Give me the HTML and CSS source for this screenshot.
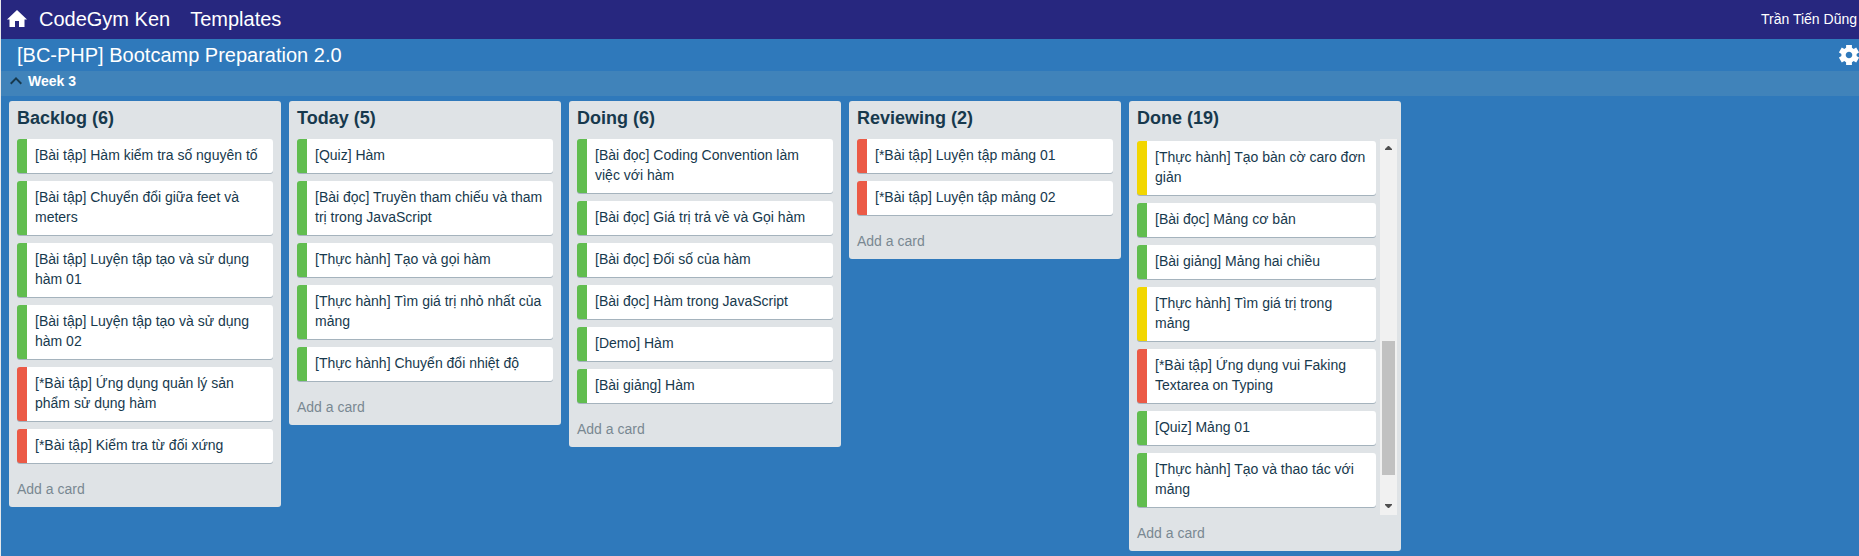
FILE: index.html
```html
<!DOCTYPE html>
<html lang="vi">
<head>
<meta charset="utf-8">
<meta name="viewport" content="width=device-width, initial-scale=1">
<title>[BC-PHP] Bootcamp Preparation 2.0</title>
<link rel="stylesheet" href="styles.css">
</head>
<body>
<header class="topbar">
  <nav class="topbar-nav">
    <a class="home-link" href="#" aria-label="Home"><svg class="home-icon" viewBox="0 0 20 17" aria-hidden="true"><path d="M8 17v-6h4v6h5.500V9.500H20L10 0 0 9.500h2.500V17z"/></svg></a>
    <a class="nav-link" href="#">CodeGym Ken</a>
    <a class="nav-link" href="#">Templates</a>
  </nav>
  <a class="user-link" href="#">Trần Tiến Dũng</a>
</header>
<div class="board-bar">
  <h1 class="board-title">[BC-PHP] Bootcamp Preparation 2.0</h1>
  <button class="settings" type="button" aria-label="Settings"><svg class="gear-icon" viewBox="-10 -10 20 20" aria-hidden="true"><g fill="none" stroke="currentColor"><circle r="5.500" stroke-width="4.400"/><path stroke-width="5.800" d="M0-10v4.500M0 10V5.500M8.660-5l-3.900 2.250M8.660 5l-3.900-2.250M-8.660-5l3.900 2.250M-8.660 5l3.900-2.250"/></g></svg></button>
</div>
<button class="lane-bar" type="button" aria-expanded="true"><svg class="chevron" viewBox="6 8 12 8" aria-hidden="true"><path d="M12 8l-6 6 1.410 1.410L12 10.830l4.590 4.580L18 14z"/></svg>Week 3</button>
<main class="board">
  <section class="list">
    <h2 class="list-title">Backlog (6)</h2>
    <ul class="cards">
      <li class="card green">[Bài tập] Hàm kiểm tra số nguyên tố</li>
      <li class="card green">[Bài tập] Chuyển đổi giữa feet và meters</li>
      <li class="card green">[Bài tập] Luyện tập tạo và sử dụng hàm 01</li>
      <li class="card green">[Bài tập] Luyện tập tạo và sử dụng hàm 02</li>
      <li class="card red">[*Bài tập] Ứng dụng quản lý sản phẩm sử dụng hàm</li>
      <li class="card red">[*Bài tập] Kiểm tra từ đối xứng</li>
    </ul>
    <button class="add-card" type="button">Add a card</button>
  </section>
  <section class="list">
    <h2 class="list-title">Today (5)</h2>
    <ul class="cards">
      <li class="card green">[Quiz] Hàm</li>
      <li class="card green">[Bài đọc] Truyền tham chiếu và tham trị trong JavaScript</li>
      <li class="card green">[Thực hành] Tạo và gọi hàm</li>
      <li class="card green">[Thực hành] Tìm giá trị nhỏ nhất của mảng</li>
      <li class="card green">[Thực hành] Chuyển đổi nhiệt độ</li>
    </ul>
    <button class="add-card" type="button">Add a card</button>
  </section>
  <section class="list">
    <h2 class="list-title">Doing (6)</h2>
    <ul class="cards">
      <li class="card green">[Bài đọc] Coding Convention làm việc với hàm</li>
      <li class="card green">[Bài đọc] Giá trị trả về và Gọi hàm</li>
      <li class="card green">[Bài đọc] Đối số của hàm</li>
      <li class="card green">[Bài đọc] Hàm trong JavaScript</li>
      <li class="card green">[Demo] Hàm</li>
      <li class="card green">[Bài giảng] Hàm</li>
    </ul>
    <button class="add-card" type="button">Add a card</button>
  </section>
  <section class="list">
    <h2 class="list-title">Reviewing (2)</h2>
    <ul class="cards">
      <li class="card red">[*Bài tập] Luyện tập mảng 01</li>
      <li class="card red">[*Bài tập] Luyện tập mảng 02</li>
    </ul>
    <button class="add-card" type="button">Add a card</button>
  </section>
  <section class="list">
    <h2 class="list-title">Done (19)</h2>
    <div class="scroll-area">
      <ul class="cards cards-scrolled">
        <li class="card yellow">[Thực hành] Tạo bàn cờ caro đơn giản</li>
        <li class="card green">[Bài đọc] Mảng cơ bản</li>
        <li class="card green">[Bài giảng] Mảng hai chiều</li>
        <li class="card yellow">[Thực hành] Tìm giá trị trong mảng</li>
        <li class="card red">[*Bài tập] Ứng dụng vui Faking Textarea on Typing</li>
        <li class="card green">[Quiz] Mảng 01</li>
        <li class="card green">[Thực hành] Tạo và thao tác với mảng</li>
      </ul>
      <div class="scrollbar" aria-hidden="true">
        <svg class="scroll-arrow" viewBox="0 0 17 17"><path d="M5 11h7v-1L9 7H8l-3 3z"/></svg>
        <div class="scroll-before"></div>
        <div class="scroll-thumb"></div>
        <div class="scroll-after"></div>
        <svg class="scroll-arrow" viewBox="0 0 17 17"><path d="M5 6h7v1l-3 3H8L5 7z"/></svg>
      </div>
    </div>
    <button class="add-card" type="button">Add a card</button>
  </section>
</main>
</body>
</html>
```

FILE: styles.css
```css
* {
  box-sizing: border-box;
}

body {
  margin: 0;
  min-height: 100vh;
  border-left: 1px solid #e6e8ea;
  background: #2f79bb;
  color: #17394d;
  font: 14px/20px "Liberation Sans", Arial, sans-serif;
}

a {
  color: inherit;
  text-decoration: none;
}

button {
  margin: 0;
  border: 0;
  background: none;
  font: inherit;
  text-align: left;
  cursor: pointer;
}

svg {
  display: block;
  fill: currentColor;
}

.topbar {
  display: flex;
  align-items: center;
  justify-content: space-between;
  height: 39px;
  padding: 0 2px 2px 6px;
  background: #27277f;
  color: #fff;
}

.topbar-nav {
  display: flex;
  align-items: center;
}

.home-icon {
  width: 20px;
  height: 17px;
}

.nav-link {
  margin-left: 12px;
  font-size: 20px;
  line-height: 24px;
}

.nav-link + .nav-link {
  margin-left: 20px;
}

.board-bar {
  display: flex;
  align-items: center;
  justify-content: space-between;
  height: 32px;
  padding-left: 16px;
  color: #fff;
}

.board-title {
  margin: 0;
  font-size: 20px;
  font-weight: 400;
  line-height: 24px;
}

.settings {
  padding: 0;
  color: #fff;
}

.gear-icon {
  width: 20px;
  height: 20px;
}

.lane-bar {
  display: flex;
  align-items: center;
  gap: 6px;
  width: 100%;
  padding: 0 9px 5px;
  background: #4083ba;
  color: #fff;
  font-weight: 700;
}

.chevron {
  width: 12px;
  height: 8px;
  color: #17394d;
}

.board {
  display: flex;
  align-items: flex-start;
  gap: 8px;
  padding: 5px 8px;
}

.list {
  flex: 0 0 272px;
  border-radius: 3px;
  background: #dfe3e6;
}

.list-title {
  margin: 0;
  padding: 6px 8px 10px;
  font-size: 18px;
  line-height: 22px;
}

.cards {
  display: flex;
  flex-direction: column;
  gap: 8px;
  margin: 0;
  padding: 0 8px 8px;
  list-style: none;
}

.card {
  padding: 6px 8px 8px;
  border-left: 10px solid;
  border-radius: 3px;
  background: #fff;
  box-shadow: 0 1px 0 #a5b3bd;
}

.green {
  border-left-color: #61bd4f;
}

.yellow {
  border-left-color: #f2d600;
}

.red {
  border-left-color: #eb5a46;
}

.add-card {
  display: block;
  width: 100%;
  padding: 8px;
  color: #798892;
}

.scroll-area {
  display: flex;
  padding-right: 4px;
}

.cards-scrolled {
  flex: 1;
  padding: 2px 4px 8px 8px;
}

.scrollbar {
  display: flex;
  flex-direction: column;
  width: 17px;
  background: #f1f1f1;
}

.scroll-arrow {
  width: 17px;
  height: 17px;
  color: #505050;
}

.scroll-before {
  flex: 185;
}

.scroll-thumb {
  flex: 134;
  margin: 0 2px;
  background: #c1c1c1;
}

.scroll-after {
  flex: 23;
}
```
